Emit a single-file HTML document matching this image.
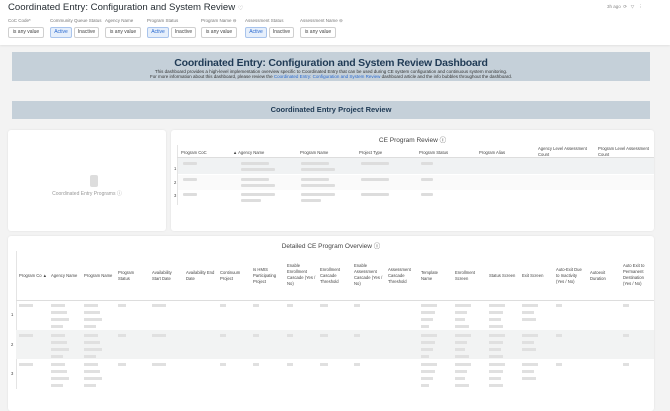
<!DOCTYPE html>
<html><head><meta charset="utf-8"><style>
*{margin:0;padding:0;box-sizing:border-box}
body{width:670px;height:406px;overflow:hidden;background:#f3f3f3;font-family:"Liberation Sans",sans-serif;color:#333;position:relative}
.hdr{position:absolute;left:0;top:0;width:670px;height:45px;background:#fff;box-shadow:0 1px 2px rgba(0,0,0,.08)}
.title{position:absolute;left:8px;top:2px;font-size:9.6px;color:#262d33}
.lab{position:absolute;top:18px;font-size:4.5px;color:#777}
.btn{position:absolute;top:27px;height:11px;border:1px solid #d0d0d0;border-radius:2px;font-size:5px;line-height:9px;text-align:center;color:#444;background:#fff}
.btn.a{background:#e6effb;border-color:#a9c4ec;color:#2a6ad0}
.ban{position:absolute;left:12px;width:638px;background:#c5d0d9;text-align:center;color:#1f3a55}
.card{position:absolute;background:#fff;border-radius:3px;box-shadow:0 0 2px rgba(0,0,0,.08)}
.th{position:absolute;font-size:4.2px;line-height:6px;color:#444}
.b{position:absolute;height:3px;background:#ddd;border-radius:1px}
.sep{position:absolute;width:1px;background:#e4e4e4}
</style></head><body>
<div class="hdr">
<div class="title">Coordinated Entry: Configuration and System Review <span style="font-size:6px;color:#999">♡</span></div>
<div style="position:absolute;left:607px;top:4px;font-size:4.5px;color:#888">3h ago&nbsp;&nbsp;⟳&nbsp;&nbsp;&nbsp;▽&nbsp;&nbsp;&nbsp;⋮</div>
<div class="lab" style="left:8px">CoC Code*</div>
<div class="lab" style="left:50px">Community Queue Status</div>
<div class="lab" style="left:105px">Agency Name</div>
<div class="lab" style="left:147px">Program Status</div>
<div class="lab" style="left:201px">Program Name ⊖</div>
<div class="lab" style="left:245px">Assessment Status</div>
<div class="lab" style="left:300px">Assessment Name ⊖</div>
<div class="btn" style="left:8px;width:36px">is any value</div>
<div class="btn a" style="left:50px;width:22px">Active</div>
<div class="btn" style="left:74px;width:25px">Inactive</div>
<div class="btn" style="left:105px;width:36px">is any value</div>
<div class="btn a" style="left:147px;width:22px">Active</div>
<div class="btn" style="left:171px;width:25px">Inactive</div>
<div class="btn" style="left:201px;width:36px">is any value</div>
<div class="btn a" style="left:245px;width:22px">Active</div>
<div class="btn" style="left:269px;width:25px">Inactive</div>
<div class="btn" style="left:300px;width:36px">is any value</div>
</div>
<div class="ban" style="top:52px;height:29px">
<div style="font-size:10.5px;font-weight:bold;margin-top:5px;letter-spacing:-0.2px">Coordinated Entry: Configuration and System Review Dashboard</div>
<div style="font-size:4.5px;color:#333;line-height:5px">This dashboard provides a high-level implementation overview specific to Coordinated Entry that can be used during CE system configuration and continuous system monitoring.<br>For more information about this dashboard, please review the <span style="color:#2a6ad0">Coordinated Entry: Configuration and System Review</span> dashboard article and the info bubbles throughout the dashboard.</div>
</div>
<div class="ban" style="top:101px;height:18px;font-size:7.5px;font-weight:bold;line-height:18px">Coordinated Entry Project Review</div>
<div class="card" style="left:8px;top:130px;width:158px;height:101px">
<div style="position:absolute;left:82px;top:45px;width:8px;height:12px;background:#ddd;border-radius:2px"></div>
<div style="position:absolute;left:0;width:100%;top:60px;text-align:center;font-size:5px;color:#999">Coordinated Entry Programs ⓘ</div>
</div>
<div class="card" style="left:171px;top:130px;width:483px;height:101px">
<div style="position:absolute;left:0;width:100%;top:4px;text-align:center;font-size:6.5px;color:#444">CE Program Review ⓘ</div>
<div style="position:absolute;left:6px;top:28px;width:477px;height:16px;background:#f0f2f3"></div>
<div style="position:absolute;left:6px;top:45px;width:477px;height:15px;background:#fafafa"></div>
<div class="sep" style="left:6px;top:15px;height:60px"></div>
<div style="position:absolute;left:6px;top:27px;width:477px;height:1px;background:#ddd"></div>
<div class="th" style="left:10px;top:20px">Program CoC</div>
<div class="th" style="left:62px;top:20px">▲ Agency Name</div>
<div class="th" style="left:129px;top:20px">Program Name</div>
<div class="th" style="left:188px;top:20px">Project Type</div>
<div class="th" style="left:248px;top:20px">Program Status</div>
<div class="th" style="left:308px;top:20px">Program Alias</div>
<div class="th" style="left:367px;top:16px">Agency Level Assessment<br>Count</div>
<div class="th" style="left:427px;top:16px">Program Level Assessment<br>Count</div>
<div class="th" style="left:3px;top:36px">1</div><div class="th" style="left:3px;top:50px">2</div><div class="th" style="left:3px;top:63px">3</div>
<div class="b" style="left:12px;top:32px;width:14px"></div><div class="b" style="left:70px;top:32px;width:28px"></div><div class="b" style="left:70px;top:38px;width:34px"></div><div class="b" style="left:130px;top:32px;width:28px"></div><div class="b" style="left:130px;top:38px;width:34px"></div><div class="b" style="left:190px;top:32px;width:28px"></div><div class="b" style="left:250px;top:32px;width:12px"></div>
<div class="b" style="left:12px;top:48px;width:14px"></div><div class="b" style="left:70px;top:48px;width:28px"></div><div class="b" style="left:70px;top:54px;width:34px"></div><div class="b" style="left:130px;top:48px;width:28px"></div><div class="b" style="left:130px;top:54px;width:34px"></div><div class="b" style="left:190px;top:48px;width:28px"></div><div class="b" style="left:250px;top:48px;width:12px"></div>
<div class="b" style="left:12px;top:63px;width:14px"></div><div class="b" style="left:70px;top:63px;width:34px"></div><div class="b" style="left:70px;top:69px;width:20px"></div><div class="b" style="left:130px;top:63px;width:34px"></div><div class="b" style="left:130px;top:69px;width:20px"></div><div class="b" style="left:190px;top:63px;width:28px"></div><div class="b" style="left:250px;top:63px;width:12px"></div>
</div>
<div class="card" style="left:8px;top:236px;width:646px;height:175px">
<div style="position:absolute;left:0;width:100%;top:4px;text-align:center;font-size:6.5px;color:#444">Detailed CE Program Overview ⓘ</div>
<div class="sep" style="left:8px;top:15px;height:138px"></div>
<div style="position:absolute;left:8px;top:64px;width:638px;height:1px;background:#ddd"></div>
<div style="position:absolute;left:8px;top:94px;width:638px;height:29px;background:#f2f3f3"></div>
<div class="th" style="left:11px;top:37px">Program Co ▲</div>
<div class="th" style="left:43px;top:37px">Agency Name</div>
<div class="th" style="left:76px;top:37px">Program Name</div>
<div class="th" style="left:110px;top:34px">Program<br>Status</div>
<div class="th" style="left:144px;top:34px">Availability<br>Start Date</div>
<div class="th" style="left:178px;top:34px">Availability End<br>Date</div>
<div class="th" style="left:212px;top:34px">Continuum<br>Project</div>
<div class="th" style="left:245px;top:31px">Is HMIS<br>Participating<br>Project</div>
<div class="th" style="left:279px;top:27px">Enable<br>Enrollment<br>Cascade (Yes /<br>No)</div>
<div class="th" style="left:312px;top:31px">Enrollment<br>Cascade<br>Threshold</div>
<div class="th" style="left:346px;top:27px">Enable<br>Assessment<br>Cascade (Yes /<br>No)</div>
<div class="th" style="left:380px;top:31px">Assessment<br>Cascade<br>Threshold</div>
<div class="th" style="left:413px;top:34px">Template<br>Name</div>
<div class="th" style="left:447px;top:34px">Enrollment<br>Screen</div>
<div class="th" style="left:481px;top:37px">Status Screen</div>
<div class="th" style="left:514px;top:37px">Exit Screen</div>
<div class="th" style="left:548px;top:31px">Auto-Exit Due<br>to Inactivity<br>(Yes / No)</div>
<div class="th" style="left:582px;top:34px">Autoexit<br>Duration</div>
<div class="th" style="left:615px;top:27px">Auto Exit to<br>Permanent<br>Destination<br>(Yes / No)</div>
<div class="th" style="left:3px;top:76px">1</div><div class="th" style="left:3px;top:106px">2</div><div class="th" style="left:3px;top:135px">3</div>
<svg style="position:absolute;left:0;top:0" width="646" height="175">
<g fill="#e0e0e0">
<rect x="11" y="68" width="14" height="3"/><rect x="11" y="98" width="14" height="3"/><rect x="11" y="127" width="14" height="3"/>
<g id="r"><rect x="43" y="68" width="14" height="3"/><rect x="43" y="75" width="16" height="3"/><rect x="43" y="82" width="18" height="3"/><rect x="43" y="89" width="12" height="3"/>
<rect x="76" y="68" width="14" height="3"/><rect x="76" y="75" width="16" height="3"/><rect x="76" y="82" width="18" height="3"/><rect x="76" y="89" width="12" height="3"/>
<rect x="110" y="68" width="8" height="3"/><rect x="144" y="68" width="14" height="3"/><rect x="212" y="68" width="6" height="3"/><rect x="245" y="68" width="6" height="3"/><rect x="279" y="68" width="6" height="3"/><rect x="312" y="68" width="8" height="3"/><rect x="346" y="68" width="6" height="3"/>
<rect x="413" y="68" width="16" height="3"/><rect x="413" y="75" width="14" height="3"/><rect x="413" y="82" width="12" height="3"/><rect x="413" y="89" width="8" height="3"/>
<rect x="447" y="68" width="16" height="3"/><rect x="447" y="75" width="12" height="3"/><rect x="447" y="82" width="10" height="3"/><rect x="447" y="89" width="14" height="3"/>
<rect x="481" y="68" width="16" height="3"/><rect x="481" y="75" width="14" height="3"/><rect x="481" y="82" width="12" height="3"/><rect x="481" y="89" width="14" height="3"/>
<rect x="514" y="68" width="16" height="3"/><rect x="514" y="75" width="12" height="3"/><rect x="514" y="82" width="14" height="3"/>
<rect x="548" y="68" width="6" height="3"/><rect x="615" y="68" width="6" height="3"/></g>
<use href="#r" y="30"/><use href="#r" y="59"/>
</g></svg>
</div>
</body></html>
